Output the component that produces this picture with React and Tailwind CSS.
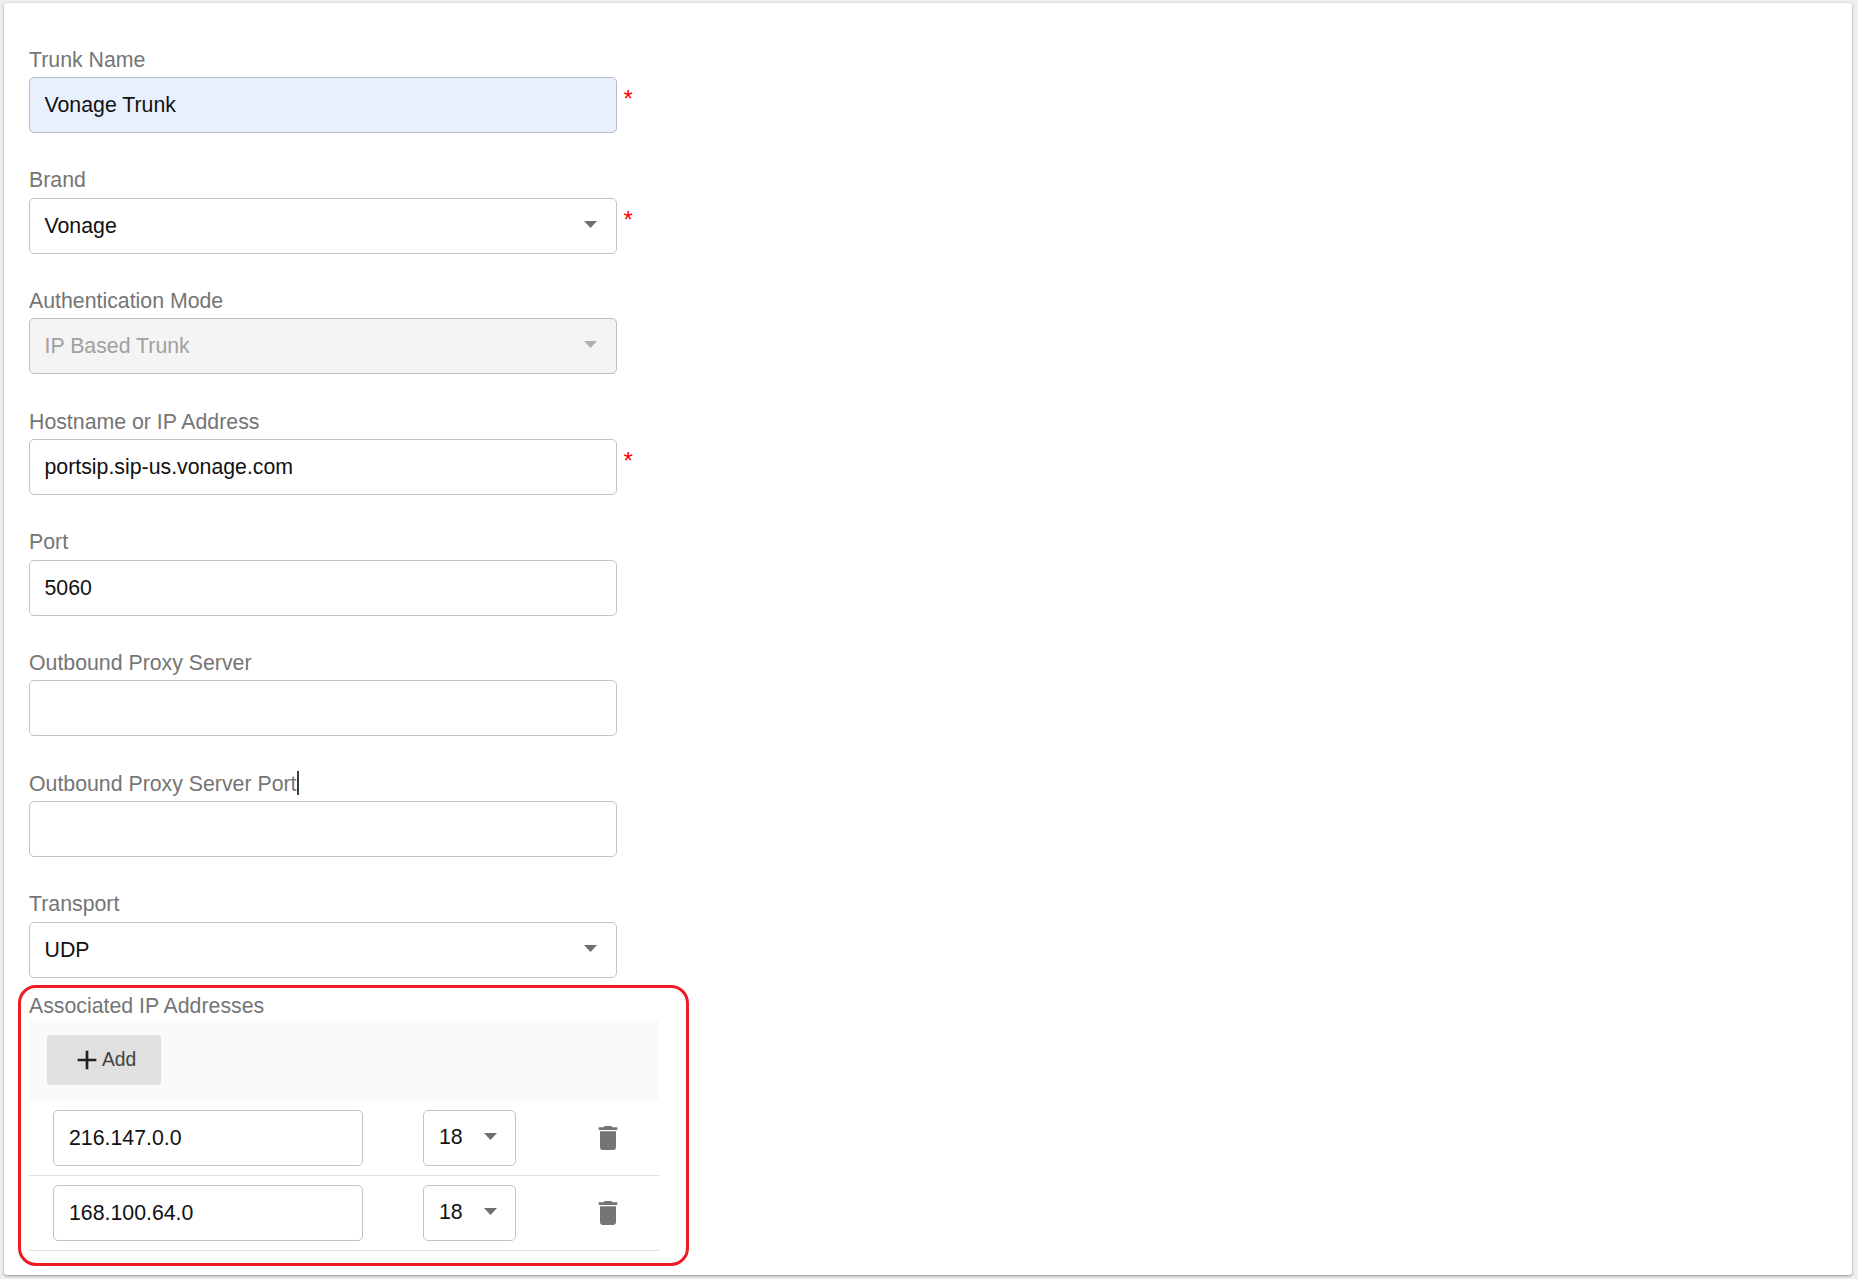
const fields = [
  { label: 'Trunk Name', value: 'Vonage Trunk', required: true, autofill: true },
  { label: 'Brand', value: 'Vonage', required: true, select: true },
  { label: 'Authentication Mode', value: 'IP Based Trunk', select: true, disabled: true },
  { label: 'Hostname or IP Address', value: 'portsip.sip-us.vonage.com', required: true },
  { label: 'Port', value: '5060' },
  { label: 'Outbound Proxy Server', value: '' },
  { label: 'Outbound Proxy Server Port', value: '', caret: true },
  { label: 'Transport', value: 'UDP', select: true },
]

const ips = ['216.147.0.0', '168.100.64.0']

function Arrow({ disabled }) {
  return (
    <svg width="13" height="7" viewBox="0 0 13 7" className={`shrink-0 ${disabled ? 'mb-[4px]' : 'mb-[2px]'}`}>
      <path d="M0 0h13L6.5 7z" fill={disabled ? '#b0b0b0' : '#6f6f6f'} />
    </svg>
  )
}

function TrashIcon() {
  return (
    <svg width="32" height="32" viewBox="0 0 24 24">
      <path
        fill="#757575"
        d="M6 19c0 1.1.9 2 2 2h8c1.1 0 2-.9 2-2V7H6v12zM19 4h-3.5l-1-1h-5l-1 1H5v2h14V4z"
      />
    </svg>
  )
}

function PlusIcon() {
  return (
    <svg width="32" height="32" viewBox="0 0 24 24" className="shrink-0">
      <path fill="#212121" d="M19 13h-6v6h-2v-6H5v-2h6V5h2v6h6v2z" />
    </svg>
  )
}

function Field({ field }) {
  const { label, value, required, autofill, select, disabled, caret } = field
  return (
    <div>
      <div className="h-[30px] pt-[0.5px] text-[21.3px] leading-[24px] text-[#757575]">
        {label}
        {caret && <span className="inline-block w-[2px] h-[24px] -mt-[1px] bg-[#3c3c3c] align-top" />}
      </div>
      <div className="flex items-start">
        <div
          className={`w-[588px] h-[56px] pl-[15px] pr-[19px] flex items-center justify-between rounded-[5px] border text-[21.3px] ${
            autofill ? 'bg-[#e8f0fe] border-[#b4b9c4]' : disabled ? 'bg-[#f4f4f4] border-[#bdbdbd]' : 'bg-white border-[#c4c4c4]'
          } ${disabled ? 'text-[#a0a0a0]' : 'text-[#111]'}`}
        >
          <span className="mt-[2px] -ml-[0.5px]">{value}</span>
          {select && <Arrow disabled={disabled} />}
        </div>
        {required && <span className="ml-[6.5px] mt-[10px] text-[#ff0000] text-[24px] leading-[24px]">*</span>}
      </div>
    </div>
  )
}

export default function App() {
  return (
    <div className="w-[1858px] h-[1279px] bg-[#eff0f2] pl-[4px] pr-[6px] pt-[3px] pb-[4px] font-['Liberation_Sans',Arial,sans-serif]">
      <div className="w-full h-full bg-white rounded-[3px] shadow-[0_1px_3px_rgba(0,0,0,0.4)] pl-[25px] pt-[44px]">
        <div className="flex flex-col gap-[34.7px]">
          {fields.map((f) => (
            <Field key={f.label} field={f} />
          ))}
        </div>
        <div className="-ml-[11px] mt-[7px] w-[671px] h-[281px] border-[3px] border-[#ed1c24] rounded-[18px] pl-[8px] pr-[27.5px] pt-[5px]">
          <div className="h-[27px] pt-[1px] text-[21.3px] leading-[24px] text-[#757575]">Associated IP Addresses</div>
          <div className="h-[81px] bg-[#fafafa] pl-[18px] pt-[15px]">
            <div className="w-[114px] h-[50px] bg-[#e0e0e0] rounded-[3px] flex items-center pl-[24px] text-[19.3px] text-[#424242]">
              <PlusIcon />
              <span className="mt-[2px] -ml-[1px]">Add</span>
            </div>
          </div>
          {ips.map((ip) => (
            <div key={ip} className="h-[75px] border-b border-[#e0e0e0] flex items-center pl-[24px]">
              <div className="w-[310px] h-[56px] px-[15px] flex items-center rounded-[5px] border border-[#c4c4c4] text-[21.3px] text-[#111]">
                <span className="mt-[2px]">{ip}</span>
              </div>
              <div className="ml-[60px] w-[93px] h-[56px] pl-[15px] pr-[18px] flex items-center justify-between rounded-[5px] border border-[#c4c4c4] text-[21.3px] text-[#111]">
                <span>18</span>
                <Arrow />
              </div>
              <div className="ml-[76px]">
                <TrashIcon />
              </div>
            </div>
          ))}
        </div>
      </div>
    </div>
  )
}
